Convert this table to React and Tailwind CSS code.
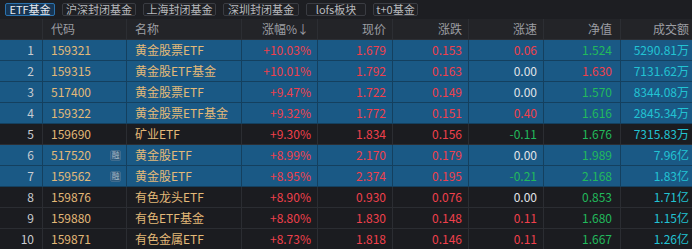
import React from "react";

const rows = [
  { i: 1, code: "159321", name: "黄金股票ETF", pct: "+10.03%", price: "1.679", chg: "0.153", spd: "0.06", spdC: "r", nav: "1.524", navC: "g", amt: "5290.81万", blue: true },
  { i: 2, code: "159315", name: "黄金股ETF基金", pct: "+10.01%", price: "1.792", chg: "0.163", spd: "0.00", spdC: "w", nav: "1.630", navC: "r", amt: "7131.62万", blue: true },
  { i: 3, code: "517400", name: "黄金股票ETF", pct: "+9.47%", price: "1.722", chg: "0.149", spd: "0.00", spdC: "w", nav: "1.570", navC: "g", amt: "8344.08万", blue: true },
  { i: 4, code: "159322", name: "黄金股票ETF基金", pct: "+9.32%", price: "1.772", chg: "0.151", spd: "0.40", spdC: "r", nav: "1.616", navC: "g", amt: "2845.34万", blue: true },
  { i: 5, code: "159690", name: "矿业ETF", pct: "+9.30%", price: "1.834", chg: "0.156", spd: "-0.11", spdC: "g", nav: "1.676", navC: "g", amt: "7315.83万", blue: false },
  { i: 6, code: "517520", name: "黄金股ETF", pct: "+8.99%", price: "2.170", chg: "0.179", spd: "0.00", spdC: "w", nav: "1.989", navC: "g", amt: "7.96亿", blue: true, rong: true },
  { i: 7, code: "159562", name: "黄金股ETF", pct: "+8.95%", price: "2.374", chg: "0.195", spd: "-0.21", spdC: "g", nav: "2.168", navC: "g", amt: "1.83亿", blue: true, rong: true },
  { i: 8, code: "159876", name: "有色龙头ETF", pct: "+8.90%", price: "0.930", chg: "0.076", spd: "0.00", spdC: "w", nav: "0.853", navC: "g", amt: "1.71亿", blue: false },
  { i: 9, code: "159880", name: "有色ETF基金", pct: "+8.80%", price: "1.830", chg: "0.148", spd: "0.11", spdC: "r", nav: "1.680", navC: "g", amt: "1.15亿", blue: false },
  { i: 10, code: "159871", name: "有色金属ETF", pct: "+8.73%", price: "1.818", chg: "0.146", spd: "0.11", spdC: "r", nav: "1.667", navC: "g", amt: "1.26亿", blue: false },
];

const colorOf = (c) =>
  c === "r" ? "text-[#f0404c]" : c === "g" ? "text-[#22b95c]" : "text-[#e2e4e8]";

const tabs = [
  { t: "ETF基金", w: "w-[50px]" },
  { t: "沪深封闭基金", w: "w-[74px]" },
  { t: "上海封闭基金", w: "w-[73px]" },
  { t: "深圳封闭基金", w: "w-[76px]" },
  { t: "lofs板块", w: "w-[60px]" },
  { t: "t+0基金", w: "w-[45px]" },
];

const grid = "grid grid-cols-[43px_84px_115px_76px_75px_76px_75px_77px_71px]";

export default function App() {
  return (
    <div
      className="w-[692px] h-[249px] overflow-hidden bg-[#1b1c20] text-[12px] leading-none"
      style={{ fontFamily: '"Noto Sans CJK SC", "Noto Sans", sans-serif' }}
    >
      <div className="h-[19px] flex items-center gap-[7px] pl-[5px] bg-[#1d1e22]">
        {tabs.map((t, k) => (
          <div
            key={t.t}
            className={
              k === 0
                ? `${t.w} h-[13px] flex items-center justify-center rounded-[2px] border border-[#2b72ad] bg-[#173553] text-[#e6eaf0] text-[11px]`
                : `${t.w} h-[13px] flex items-center justify-center rounded-[2px] border border-[#3a3c42] bg-[#1f2024] text-[#b8babe] text-[11px]`
            }
          >
            {t.t}
          </div>
        ))}
      </div>
      <div className={`${grid} h-[21px] bg-[#232428] border-b border-[#2c2e33] text-[#9c9ea3]`}>
        <div className="border-r border-[#2c2e33]" />
        <div className="border-r border-[#2c2e33] flex items-center pl-[8px]">代码</div>
        <div className="border-r border-[#2c2e33] flex items-center pl-[8px]">名称</div>
        <div className="border-r border-[#2c2e33] flex items-center justify-end pr-[8px]">涨幅%↓</div>
        <div className="border-r border-[#2c2e33] flex items-center justify-end pr-[6px]">现价</div>
        <div className="border-r border-[#2c2e33] flex items-center justify-end pr-[6px]">涨跌</div>
        <div className="border-r border-[#2c2e33] flex items-center justify-end pr-[6px]">涨速</div>
        <div className="border-r border-[#2c2e33] flex items-center justify-end pr-[8px]">净值</div>
        <div className="flex items-center justify-end pr-[3px]">成交额</div>
      </div>
      {rows.map((r) => {
        const bg = r.blue ? "bg-[#1a5985]" : "bg-[#1b1c20]";
        const line = r.blue ? "border-[#14405f]" : "border-[#2b2d32]";
        return (
          <div key={r.i} className={`${grid} h-[21px] border-b ${line} ${bg}`}>
            <div className={`border-r ${line} flex items-center justify-end pr-[8px] text-[#c9ccd1]`}>{r.i}</div>
            <div className={`border-r ${line} flex items-center justify-between pl-[8px] pr-[5px] text-[#e3b978]`}>
              <span>{r.code}</span>
              {r.rong && (
                <span className="w-[11px] h-[11px] rounded-[2px] bg-[#2e5a7c] border border-[#3f6c8e] text-[#a3b6c6] text-[8px] flex items-center justify-center">
                  融
                </span>
              )}
            </div>
            <div className={`border-r ${line} flex items-center pl-[8px] text-[#e3b978]`}>{r.name}</div>
            <div className={`border-r ${line} flex items-center justify-end pr-[6px] text-[#f0404c]`}>{r.pct}</div>
            <div className={`border-r ${line} flex items-center justify-end pr-[6px] text-[#f0404c]`}>{r.price}</div>
            <div className={`border-r ${line} flex items-center justify-end pr-[6px] text-[#f0404c]`}>{r.chg}</div>
            <div className={`border-r ${line} flex items-center justify-end pr-[6px] ${colorOf(r.spdC)}`}>{r.spd}</div>
            <div className={`border-r ${line} flex items-center justify-end pr-[8px] ${colorOf(r.navC)}`}>{r.nav}</div>
            <div className="flex items-center justify-end pr-[3px] text-[#22c3d3]">{r.amt}</div>
          </div>
        );
      })}
    </div>
  );
}
